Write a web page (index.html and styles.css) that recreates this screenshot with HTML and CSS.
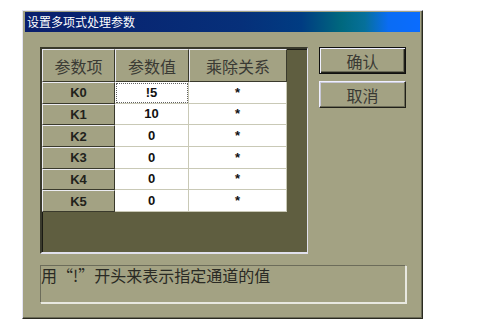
FILE: index.html
```html
<!DOCTYPE html>
<html>
<head>
<meta charset="utf-8">
<link rel="stylesheet" href="styles.css">
</head>
<body>
<div class="window">
  <div class="titlebar">设置多项式处理参数</div>
  <div class="content">
    <div class="main">
      <div class="grid">
        <div class="hd">参数项</div><div class="hd">参数值</div><div class="hd">乘除关系</div>
        <div class="rh">K0</div><div class="cell focus">!5</div><div class="cell">*</div>
        <div class="rh">K1</div><div class="cell">10</div><div class="cell">*</div>
        <div class="rh">K2</div><div class="cell">0</div><div class="cell">*</div>
        <div class="rh">K3</div><div class="cell">0</div><div class="cell">*</div>
        <div class="rh">K4</div><div class="cell">0</div><div class="cell">*</div>
        <div class="rh">K5</div><div class="cell">0</div><div class="cell">*</div>
      </div>
      <div class="buttons">
        <div class="btn default"><span>确认</span></div>
        <div class="btn">取消</div>
      </div>
    </div>
    <div class="status">用“!”开头来表示指定通道的值</div>
  </div>
</div>
</body>
</html>
```
FILE: styles.css
```css
html, body {
  margin: 0;
  padding: 0;
  background: #ffffff;
}
body {
  width: 483px;
  height: 329px;
  font-family: "Noto Sans CJK SC", "Liberation Sans", sans-serif;
}
.window {
  margin: 10px 0 0 22px;
  width: 401px;
  height: 309px;
  box-sizing: border-box;
  background: #a3a283;
  border-top: 1px solid #e4e4f4;
  border-left: 1px solid #e4e4f4;
  border-right: 1px solid #2a2a20;
  border-bottom: 1px solid #2a2a20;
  box-shadow: inset -1px -1px 0 #6c6c58;
  padding: 1px 2px 0 2px;
}
.titlebar {
  height: 20px;
  background: linear-gradient(to right, #0a1e6c 0%, #06307a 55%, #003c82 70%, #00687e 80%, #06709a 86%, #0a6cf4 92%, #0a6cff 100%);
  color: #ffffff;
  font-size: 12px;
  line-height: 19px;
  padding-left: 2px;
  white-space: nowrap;
}
.content {
  padding: 15px 0 0 15px;
}
.main {
  display: flex;
  align-items: flex-start;
}
.grid {
  width: 268px;
  height: 207px;
  box-sizing: border-box;
  background: #5f5e40;
  border-top: 2px solid #3a3a2c;
  border-left: 2px solid #3a3a2c;
  border-right: 1px solid #e0e0ec;
  border-bottom: 2px solid #e0e0ec;
  box-shadow: inset 1px 1px 0 #1a1a14;
  display: grid;
  grid-template-columns: 73px 74px 98px;
  grid-template-rows: 33px repeat(6, 21.67px);
  align-content: start;
}
.hd {
  box-sizing: border-box;
  background: #a3a283;
  border-top: 1px solid #e8e8f0;
  border-left: 1px solid #e8e8f0;
  border-right: 1px solid #3a3a2c;
  border-bottom: 1px solid #3a3a2c;
  color: #3a3a34;
  font-size: 16px;
  display: flex;
  align-items: center;
  justify-content: center;
}
.rh {
  box-sizing: border-box;
  background: #a3a283;
  border-top: 1px solid #ececf2;
  border-left: 1px solid #ececf2;
  border-right: 1px solid #3a3a2c;
  border-bottom: 1px solid #3a3a2c;
  color: #22221c;
  font-family: "Liberation Sans", sans-serif;
  font-weight: bold;
  font-size: 13px;
  display: flex;
  align-items: center;
  justify-content: center;
}
.cell {
  box-sizing: border-box;
  background: #ffffff;
  border-right: 1px solid #c9c9b6;
  border-bottom: 1px solid #c9c9b6;
  color: #111111;
  font-family: "Liberation Sans", sans-serif;
  font-weight: bold;
  font-size: 13px;
  display: flex;
  align-items: center;
  justify-content: center;
}
.cell.focus {
  outline: 1px dotted #606060;
  outline-offset: -2px;
}
.buttons {
  margin-left: 11px;
  display: flex;
  flex-direction: column;
  gap: 7px;
}
.btn {
  width: 87px;
  height: 27px;
  box-sizing: border-box;
  background: #a3a283;
  border-top: 1px solid #f0f0ff;
  border-left: 1px solid #f0f0ff;
  border-right: 1px solid #202018;
  border-bottom: 1px solid #202018;
  box-shadow: inset -1px -1px 0 #6c6c58, inset 1px 1px 0 #c8c8d8;
  color: #3a3a34;
  font-size: 16px;
  display: flex;
  align-items: center;
  justify-content: center;
}
.btn.default {
  border: 1px solid #101010;
  box-shadow: inset 1px 1px 0 #f0f0ff, inset -1px -1px 0 #202018, inset -2px -2px 0 #6c6c58;
}
.status {
  margin-top: 11px;
  width: 366px;
  height: 38px;
  box-sizing: border-box;
  border-top: 1px solid #6c6c5a;
  border-left: 1px solid #6c6c5a;
  border-right: 1px solid #e8e8e0;
  border-bottom: 1px solid #e8e8e0;
  box-shadow: 1px 1px 0 #e8e8e0;
  color: #2a2a24;
  font-size: 16px;
  line-height: 18px;
  padding-left: 0;
  white-space: nowrap;
}
```
